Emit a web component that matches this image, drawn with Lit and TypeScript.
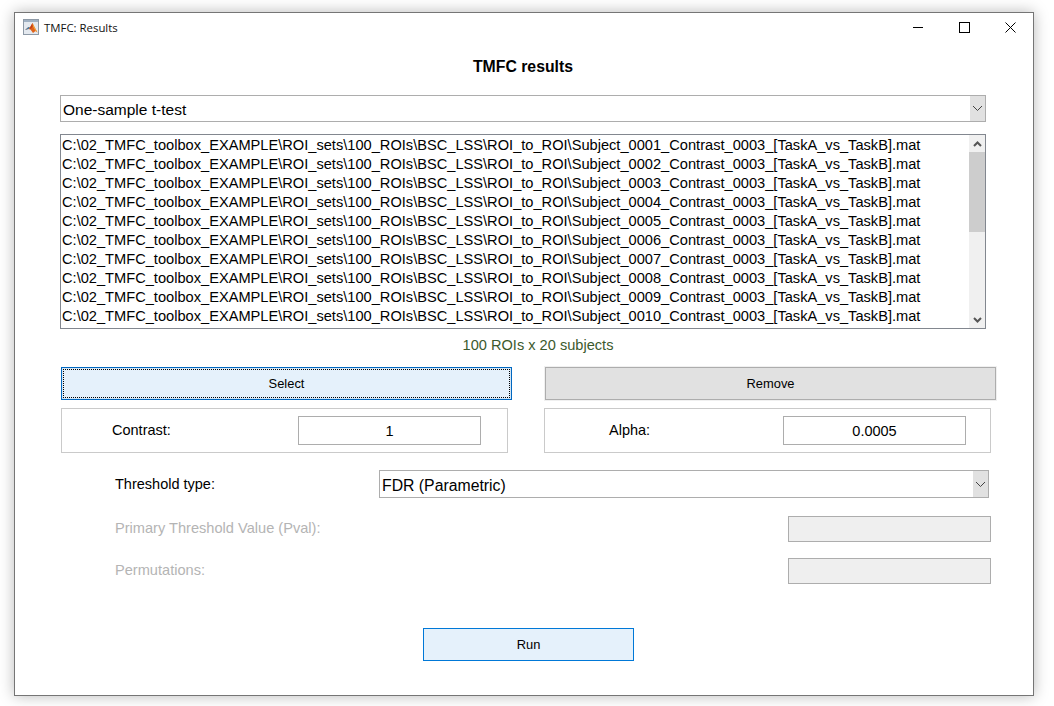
import { LitElement, html, css, svg } from "lit";
import { customElement } from "lit/decorators.js";

const SUBJECTS = ["0001", "0002", "0003", "0004", "0005", "0006", "0007", "0008", "0009", "0010"];
const rowPath = (id: string) =>
  `C:\\02_TMFC_toolbox_EXAMPLE\\ROI_sets\\100_ROIs\\BSC_LSS\\ROI_to_ROI\\Subject_${id}_Contrast_0003_[TaskA_vs_TaskB].mat`;

const chevron = html`<svg width="11" height="7" viewBox="0 0 11 7">
  <path d="M1 1 L5.5 5.5 L10 1" fill="none" stroke="#444" stroke-width="1" />
</svg>`;

const logo = svg`<svg class="logo" width="16" height="16" viewBox="0 0 16 16">
  <rect x="0.5" y="0.5" width="15" height="15" fill="#e4e9ef" stroke="#8d99a6" />
  <rect x="1" y="1" width="14" height="2" fill="#9fb0c2" />
  <path d="M2 11 L5.5 8 L7 8.5 L9.5 4 L12 9 L14.5 13.5 L12.5 12 L10 14 L7.5 10.5 L5 10 Z" fill="#e0621c" />
  <path d="M2 11 L5.5 8 L7 8.5 L5.5 10 Z" fill="#3f7fb0" />
  <path d="M9.5 4 L7 8.5 L7.5 10.5 L9.5 7.5 Z" fill="#c23f17" />
  <path d="M9.5 4 L12 9 L14.5 13.5 L12.5 12 L10 7.5 Z" fill="#f2a63a" />
</svg>`;

@customElement("app-root")
export class AppRoot extends LitElement {
  static styles = css`
    :host {
      display: block;
      width: 1054px;
      height: 706px;
      overflow: hidden;
      background: #fff;
      font-family: "Liberation Sans", Arial, sans-serif;
      color: #000;
    }
    .window {
      box-sizing: border-box;
      width: 1020px;
      height: 684px;
      margin: 12px 0 0 14px;
      background: #fff;
      border: 1px solid #757575;
      box-shadow: 0 0 14px rgba(0, 0, 0, 0.28);
      display: flex;
      flex-direction: column;
    }
    .titlebar {
      box-sizing: border-box;
      height: 30px;
      display: flex;
      align-items: center;
      padding: 0 0 2px 8px;
      font-family: "Open Sans", sans-serif;
      font-size: 11.4px;
      color: #111;
    }
    .logo {
      margin-right: 5px;
      flex: none;
    }
    .controls {
      margin-left: auto;
      display: flex;
    }
    .controls span {
      width: 46px;
      height: 28px;
      display: flex;
      align-items: center;
      justify-content: center;
    }
    h1 {
      margin: 16px 0 0;
      height: 16px;
      line-height: 16px;
      font-size: 15.8px;
      font-weight: bold;
      text-align: center;
      width: 1016px;
    }
    .select {
      box-sizing: border-box;
      display: flex;
      align-items: stretch;
      border: 1px solid #adadad;
      background: #fff;
      font-size: 15.5px;
    }
    .select .value {
      flex: 1;
      padding: 3px 0 0 2px;
      display: flex;
      align-items: center;
    }
    .select .arrow {
      width: 15px;
      background: #e1e1e1;
      display: flex;
      align-items: center;
      justify-content: center;
    }
    .test {
      width: 926px;
      height: 27px;
      margin: 20px 0 0 45px;
    }
    .list {
      box-sizing: border-box;
      width: 926px;
      height: 195px;
      margin: 12px 0 0 45px;
      border: 1px solid #82878f;
      display: flex;
      overflow: hidden;
    }
    .rows {
      flex: 1;
      padding: 1px 0 0 1px;
      font-size: 14.64px;
      white-space: nowrap;
    }
    .rows div {
      height: 19px;
      line-height: 19px;
    }
    .scroll {
      width: 16px;
      background: #f0f0f0;
      display: flex;
      flex-direction: column;
    }
    .scroll .btn {
      height: 17px;
      display: flex;
      align-items: center;
      justify-content: center;
    }
    .scroll .thumb {
      height: 80px;
      background: #cdcdcd;
    }
    .scroll .gap {
      flex: 1;
    }
    .count {
      margin: 8px 0 0 0;
      width: 1046px;
      height: 16px;
      line-height: 16px;
      font-size: 14.6px;
      color: #3c5a2d;
      text-align: center;
    }
    .actions {
      display: flex;
      margin: 14px 0 0 46px;
      gap: 33px;
    }
    .button {
      box-sizing: border-box;
      height: 33px;
      width: 451px;
      display: flex;
      align-items: center;
      justify-content: center;
      font-size: 12.9px;
      position: relative;
    }
    .select-btn {
      background: #e5f1fb;
      border: 1px solid #0067c0;
      box-shadow: inset 0 0 0 1px #d2e5f5;
    }
    .select-btn::after {
      content: "";
      position: absolute;
      inset: 1px;
      border: 1px dotted #000;
    }
    .remove-btn {
      background: #e1e1e1;
      border: 1px solid #adadad;
      outline: 1px solid #f0f0f0;
    }
    .panels {
      display: flex;
      margin: 8px 0 0 46px;
      gap: 36px;
    }
    .panel {
      box-sizing: border-box;
      width: 447px;
      height: 45px;
      border: 1px solid #cacaca;
      display: flex;
      align-items: center;
      font-size: 14.5px;
    }
    .panel label {
      width: 186px;
      padding: 0 0 2px 50px;
      box-sizing: border-box;
    }
    .panel.alpha label {
      padding-left: 64px;
      width: 238px;
    }
    .field {
      box-sizing: border-box;
      width: 183px;
      height: 29px;
      border: 1px solid #adadad;
      background: #fff;
      display: flex;
      align-items: center;
      justify-content: center;
      font-size: 14.5px;
    }
    .threshold {
      display: flex;
      align-items: center;
      margin: 17px 0 0 100px;
      font-size: 14.5px;
      height: 28px;
    }
    .threshold label {
      width: 264px;
    }
    .threshold .select {
      width: 610px;
      height: 28px;
      font-size: 15.8px;
    }
    .disabled-row {
      display: flex;
      align-items: center;
      justify-content: space-between;
      width: 876px;
      height: 26px;
      margin: 18px 0 0 100px;
      font-size: 14.6px;
      color: #b4b4b4;
    }
    .disabled-row span {
      padding-bottom: 2px;
    }
    .disabled-row.second {
      margin-top: 16px;
    }
    .disabled-row .box {
      box-sizing: border-box;
      width: 203px;
      height: 26px;
      background: #efefef;
      border: 1px solid #adadad;
    }
    .run-btn {
      width: 211px;
      margin: 44px 0 0 408px;
      background: #e5f1fb;
      border: 1px solid #0078d7;
    }
    .contrast-field {
      margin-left: 50px;
    }
  `;

  render() {
    return html`
      <div class="window">
        <div class="titlebar">
          ${logo}<span>TMFC: Results</span>
          <div class="controls">
            <span><svg width="11" height="11" viewBox="0 0 11 11"><path d="M0 5.5H10" stroke="#000" fill="none" /></svg></span>
            <span><svg width="11" height="11" viewBox="0 0 11 11"><rect x="0.5" y="0.5" width="10" height="10" fill="none" stroke="#000" /></svg></span>
            <span><svg width="11" height="11" viewBox="0 0 11 11"><path d="M0.5 0.5L10.5 10.5M10.5 0.5L0.5 10.5" stroke="#000" fill="none" /></svg></span>
          </div>
        </div>
        <h1>TMFC results</h1>
        <div class="select test">
          <div class="value">One-sample t-test</div>
          <div class="arrow">${chevron}</div>
        </div>
        <div class="list">
          <div class="rows">${SUBJECTS.map((s) => html`<div>${rowPath(s)}</div>`)}</div>
          <div class="scroll">
            <div class="btn"><svg width="9" height="6" viewBox="0 0 9 6"><path d="M1 5 L4.5 1.5 L8 5" fill="none" stroke="#555" stroke-width="2" /></svg></div>
            <div class="thumb"></div>
            <div class="gap"></div>
            <div class="btn"><svg width="9" height="6" viewBox="0 0 9 6"><path d="M1 1 L4.5 4.5 L8 1" fill="none" stroke="#555" stroke-width="2" /></svg></div>
          </div>
        </div>
        <div class="count">100 ROIs x 20 subjects</div>
        <div class="actions">
          <div class="button select-btn">Select</div>
          <div class="button remove-btn">Remove</div>
        </div>
        <div class="panels">
          <div class="panel"><label>Contrast:</label><div class="field contrast-field">1</div></div>
          <div class="panel alpha"><label>Alpha:</label><div class="field">0.0005</div></div>
        </div>
        <div class="threshold">
          <label>Threshold type:</label>
          <div class="select">
            <div class="value">FDR (Parametric)</div>
            <div class="arrow">${chevron}</div>
          </div>
        </div>
        <div class="disabled-row"><span>Primary Threshold Value (Pval):</span><div class="box"></div></div>
        <div class="disabled-row second"><span>Permutations:</span><div class="box"></div></div>
        <div class="button run-btn">Run</div>
      </div>
    `;
  }
}
